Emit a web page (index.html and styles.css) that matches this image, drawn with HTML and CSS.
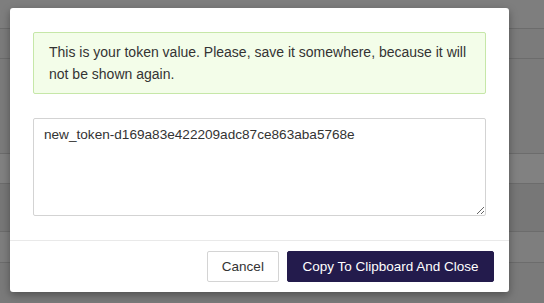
FILE: index.html
```html
<!DOCTYPE html>
<html>
<head>
<meta charset="utf-8">
<link rel="stylesheet" href="styles.css">
</head>
<body>
<div class="page">
  <div class="row r1"></div>
  <div class="row r2"></div>
  <div class="row r3"></div>
  <div class="row r4 light"></div>
  <div class="row r5"></div>
  <div class="row r6"></div>
  <div class="row r7"></div>
</div>
<div class="modal">
  <div class="modal-body">
    <div class="alert">This is your token value. Please, save it somewhere, because it will not be shown again.</div>
    <textarea class="token" readonly>new_token-d169a83e422209adc87ce863aba5768e</textarea>
  </div>
  <div class="modal-footer">
    <button class="btn btn-default">Cancel</button>
    <button class="btn btn-primary">Copy To Clipboard And Close</button>
  </div>
</div>
</body>
</html>
```
FILE: styles.css
```css
html, body {
  margin: 0;
  padding: 0;
}
body {
  width: 544px;
  height: 303px;
  overflow: hidden;
  background: #7b7b7b;
  font-family: "Liberation Sans", Arial, sans-serif;
  font-size: 14px;
  color: #333;
  position: relative;
}
.page {
  display: flex;
  flex-direction: column;
}
.row {
  border-bottom: 1px solid #6c6c6c;
  box-sizing: border-box;
}
.r1 { height: 29px; background: #7e7e7e; }
.r2 { height: 30px; background: #7b7b7b; }
.r3 { height: 95px; background: #7b7b7b; }
.r4 { height: 30px; }
.light { background: #818181; }
.r5 { height: 48px; background: #777777; }
.r6 { height: 31px; background: #7e7e7e; }
.r7 { height: 40px; background: #7a7a7a; border-bottom: none; }

.modal {
  position: absolute;
  left: 10px;
  top: 8px;
  width: 499px;
  background: #fff;
  border-radius: 3px;
  box-shadow: 0 3px 9px rgba(0, 0, 0, 0.35);
}
.modal-body {
  padding: 24px 23px 24px;
  display: flex;
  flex-direction: column;
}
.alert {
  background: #f3fde9;
  border: 1px solid #c6e7a8;
  border-radius: 2px;
  padding: 8px 15px;
  line-height: 22px;
  color: #333;
}
.token {
  margin: 24px 0 0;
  height: 98px;
  box-sizing: border-box;
  border: 1px solid #d3d3d3;
  border-radius: 2px;
  padding: 6px 10px;
  font-family: "Liberation Sans", Arial, sans-serif;
  font-size: 13.6px;
  line-height: 20px;
  color: #333;
  resize: vertical;
  outline: none;
  width: 100%;
}
.modal-footer {
  border-top: 1px solid #e9e9e9;
  padding: 10px 15px 10px;
  display: flex;
  justify-content: flex-end;
  gap: 8px;
}
.btn {
  height: 31px;
  box-sizing: border-box;
  font-family: "Liberation Sans", Arial, sans-serif;
  font-size: 13.5px;
  border-radius: 2px;
  padding: 0 14px;
  cursor: pointer;
}
.btn-default {
  background: #fff;
  border: 1px solid #d4d4d4;
  color: #333;
}
.btn-primary {
  background: #231b4c;
  border: 1px solid #231b4c;
  color: #fff;
  padding: 0 14.5px;
}
```
